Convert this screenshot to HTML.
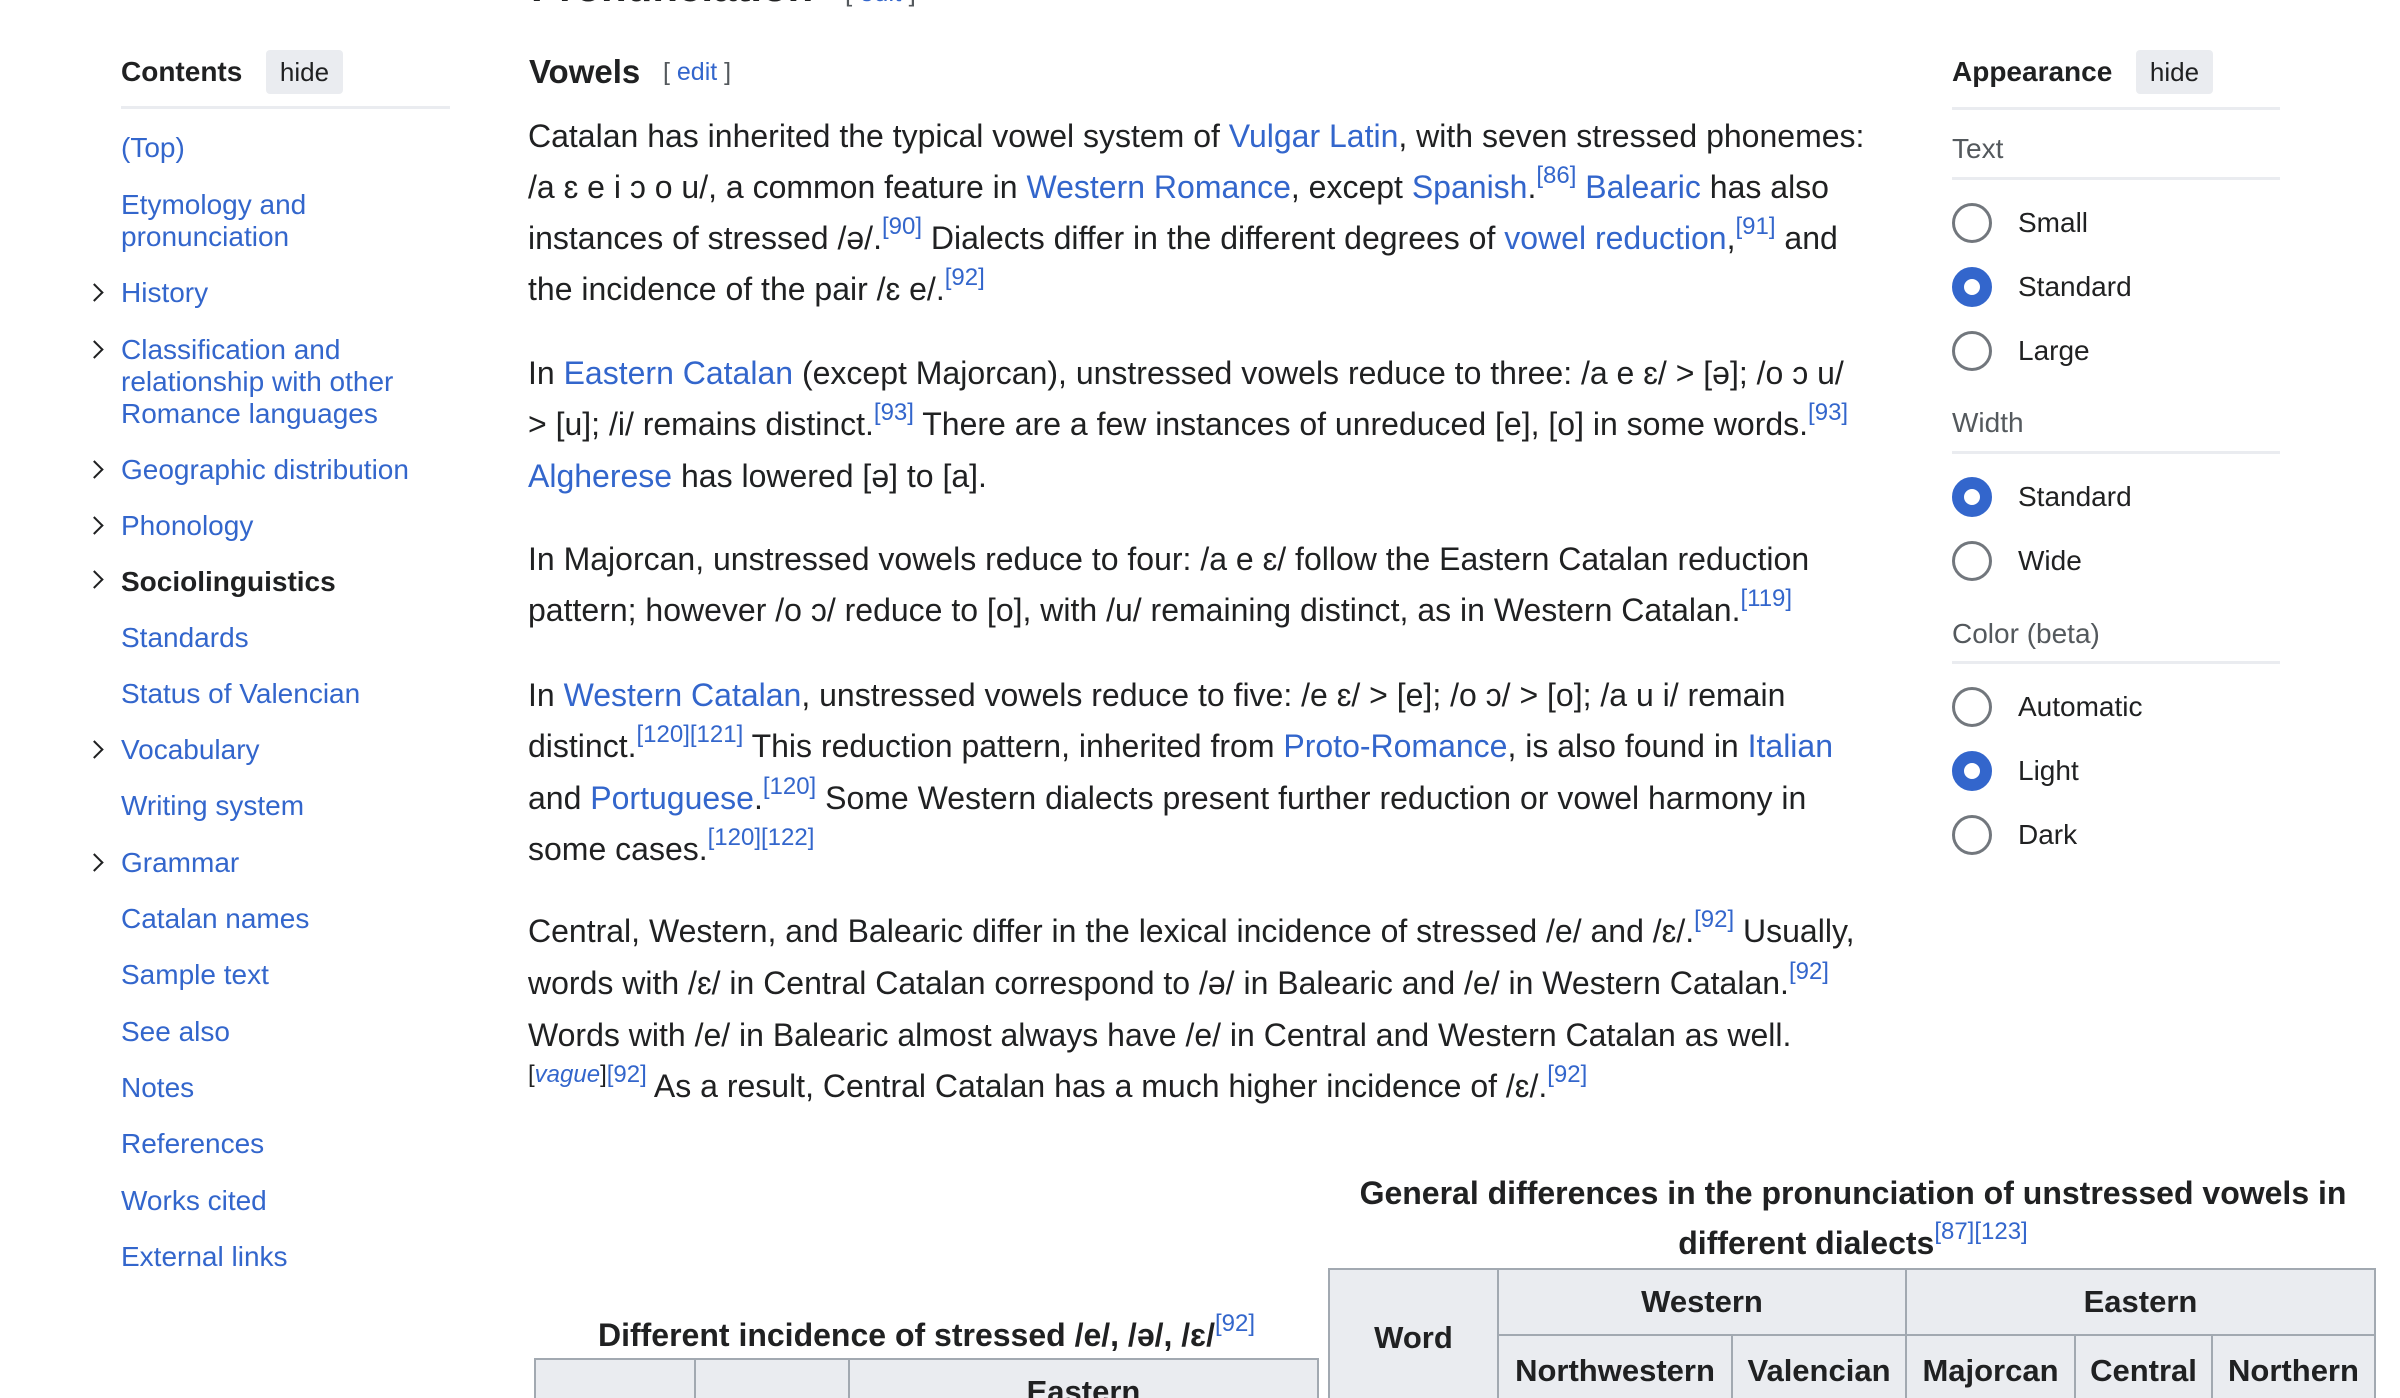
<!DOCTYPE html>
<html><head><meta charset="utf-8">
<style>
*{margin:0;padding:0;box-sizing:border-box}
html,body{width:2400px;height:1398px;overflow:hidden;background:#fff}
body{position:relative;font-family:"Liberation Sans",Arial,sans-serif;color:#202122}
a{color:#3366cc;text-decoration:none}
.abs{position:absolute;white-space:nowrap}
.toc{position:absolute;left:121px;font-size:28px;line-height:32px;color:#3366cc;white-space:nowrap}
.chev{position:absolute;left:88px;width:13px;height:13px;border-right:2.5px solid #202122;border-top:2.5px solid #202122;transform:rotate(45deg)}
.ln{position:absolute;left:528px;font-size:32px;line-height:52px;white-space:nowrap;color:#202122}
sup{font-size:24px;line-height:1;vertical-align:0;position:relative;top:-15px;color:#3366cc;font-weight:normal}
.lbl{position:absolute;left:1952px;font-size:28px;color:#54595d;line-height:32px}
.hr{position:absolute;left:1952px;width:328px;height:3px;background:#eaecf0}
.radio{position:absolute;left:1952px;width:40px;height:40px;border-radius:50%;border:3px solid #72777d;background:#fff}
.radio.on{border:12px solid #3366cc}
.rl{position:absolute;left:2018px;font-size:28px;line-height:32px;color:#202122}
.th{position:absolute;background:#eaecf0;border:2px solid #a2a9b1;font-weight:bold;font-size:31px;display:flex;align-items:center;justify-content:center;color:#202122}
</style></head><body>

<div class="abs" style="left:531px;top:-34px;font-size:42px;font-weight:bold;line-height:42px">Pronunciation <span style="font-weight:normal;font-size:26px;color:#54595d;margin-left:20px">[ <a>edit</a> ]</span></div>

<div class="abs" style="left:121px;top:56px;font-size:28px;font-weight:bold;line-height:32px">Contents</div>
<div class="abs" style="left:266px;top:50px;width:77px;height:44px;background:#eaecf0;border-radius:4px;font-size:26px;line-height:44px;text-align:center">hide</div>
<div class="abs" style="left:121px;top:106px;width:329px;height:3px;background:#eaecf0"></div>

<div class="toc" style="top:132px">(Top)</div>
<div class="toc" style="top:189px">Etymology and<br>pronunciation</div>
<div class="chev" style="top:286px"></div><div class="toc" style="top:277px">History</div>
<div class="chev" style="top:343px"></div><div class="toc" style="top:334px">Classification and<br>relationship with other<br>Romance languages</div>
<div class="chev" style="top:463px"></div><div class="toc" style="top:454px">Geographic distribution</div>
<div class="chev" style="top:519px"></div><div class="toc" style="top:510px">Phonology</div>
<div class="chev" style="top:573px"></div><div class="toc" style="top:566px;color:#202122;font-weight:bold">Sociolinguistics</div>
<div class="toc" style="top:622px">Standards</div>
<div class="toc" style="top:678px">Status of Valencian</div>
<div class="chev" style="top:743px"></div><div class="toc" style="top:734px">Vocabulary</div>
<div class="toc" style="top:790px">Writing system</div>
<div class="chev" style="top:856px"></div><div class="toc" style="top:847px">Grammar</div>
<div class="toc" style="top:903px">Catalan names</div>
<div class="toc" style="top:959px">Sample text</div>
<div class="toc" style="top:1016px">See also</div>
<div class="toc" style="top:1072px">Notes</div>
<div class="toc" style="top:1128px">References</div>
<div class="toc" style="top:1185px">Works cited</div>
<div class="toc" style="top:1241px">External links</div>

<div class="abs" style="left:529px;top:52px;font-size:33px;font-weight:bold;line-height:40px">Vowels</div>
<div class="abs" style="left:663px;top:56px;font-size:25px;line-height:32px;color:#54595d">[ <a>edit</a> ]</div>

<div class="ln" style="top:110px">Catalan has inherited the typical vowel system of <a>Vulgar Latin</a>, with seven stressed phonemes:</div>
<div class="ln" style="top:161px">/a ɛ e i ɔ o u/, a common feature in <a>Western Romance</a>, except <a>Spanish</a>.<sup>[86]</sup> <a>Balearic</a> has also</div>
<div class="ln" style="top:212px">instances of stressed /ə/.<sup>[90]</sup> Dialects differ in the different degrees of <a>vowel reduction</a>,<sup>[91]</sup> and</div>
<div class="ln" style="top:263px">the incidence of the pair /ɛ e/.<sup>[92]</sup></div>

<div class="ln" style="top:347px">In <a>Eastern Catalan</a> (except Majorcan), unstressed vowels reduce to three: /a e ɛ/ &gt; [ə]; /o ɔ u/</div>
<div class="ln" style="top:398px">&gt; [u]; /i/ remains distinct.<sup>[93]</sup> There are a few instances of unreduced [e], [o] in some words.<sup>[93]</sup></div>
<div class="ln" style="top:450px"><a>Algherese</a> has lowered [ə] to [a].</div>

<div class="ln" style="top:533px">In Majorcan, unstressed vowels reduce to four: /a e ɛ/ follow the Eastern Catalan reduction</div>
<div class="ln" style="top:584px">pattern; however /o ɔ/ reduce to [o], with /u/ remaining distinct, as in Western Catalan.<sup>[119]</sup></div>

<div class="ln" style="top:669px">In <a>Western Catalan</a>, unstressed vowels reduce to five: /e ɛ/ &gt; [e]; /o ɔ/ &gt; [o]; /a u i/ remain</div>
<div class="ln" style="top:720px">distinct.<sup>[120][121]</sup> This reduction pattern, inherited from <a>Proto-Romance</a>, is also found in <a>Italian</a></div>
<div class="ln" style="top:772px">and <a>Portuguese</a>.<sup>[120]</sup> Some Western dialects present further reduction or vowel harmony in</div>
<div class="ln" style="top:823px">some cases.<sup>[120][122]</sup></div>

<div class="ln" style="top:905px">Central, Western, and Balearic differ in the lexical incidence of stressed /e/ and /ɛ/.<sup>[92]</sup> Usually,</div>
<div class="ln" style="top:957px">words with /ɛ/ in Central Catalan correspond to /ə/ in Balearic and /e/ in Western Catalan.<sup>[92]</sup></div>
<div class="ln" style="top:1009px">Words with /e/ in Balearic almost always have /e/ in Central and Western Catalan as well.</div>
<div class="ln" style="top:1060px"><sup style="color:#202122">[<a><i>vague</i></a>]<a>[92]</a></sup> As a result, Central Catalan has a much higher incidence of /ɛ/.<sup>[92]</sup></div>

<div class="abs" style="left:1952px;top:56px;font-size:28px;font-weight:bold;line-height:32px">Appearance</div>
<div class="abs" style="left:2136px;top:50px;width:77px;height:44px;background:#eaecf0;border-radius:4px;font-size:26px;line-height:44px;text-align:center">hide</div>
<div class="hr" style="top:107px"></div>
<div class="lbl" style="top:133px">Text</div>
<div class="hr" style="top:177px"></div>
<div class="radio" style="top:203px"></div><div class="rl" style="top:207px">Small</div>
<div class="radio on" style="top:267px"></div><div class="rl" style="top:271px">Standard</div>
<div class="radio" style="top:331px"></div><div class="rl" style="top:335px">Large</div>
<div class="lbl" style="top:407px">Width</div>
<div class="hr" style="top:451px"></div>
<div class="radio on" style="top:477px"></div><div class="rl" style="top:481px">Standard</div>
<div class="radio" style="top:541px"></div><div class="rl" style="top:545px">Wide</div>
<div class="lbl" style="top:618px">Color (beta)</div>
<div class="hr" style="top:661px"></div>
<div class="radio" style="top:687px"></div><div class="rl" style="top:691px">Automatic</div>
<div class="radio on" style="top:751px"></div><div class="rl" style="top:755px">Light</div>
<div class="radio" style="top:815px"></div><div class="rl" style="top:819px">Dark</div>

<div class="abs" style="left:1328px;width:1050px;top:1168px;font-size:32px;font-weight:bold;line-height:50px;text-align:center;white-space:normal">General differences in the pronunciation of unstressed vowels in<br>different dialects<sup>[87][123]</sup></div>
<div class="th" style="left:1328px;top:1268px;width:171px;height:140px">Word</div>
<div class="th" style="left:1497px;top:1268px;width:410px;height:68px">Western</div>
<div class="th" style="left:1905px;top:1268px;width:471px;height:68px">Eastern</div>
<div class="th" style="left:1497px;top:1334px;width:236px;height:74px">Northwestern</div>
<div class="th" style="left:1731px;top:1334px;width:176px;height:74px">Valencian</div>
<div class="th" style="left:1905px;top:1334px;width:171px;height:74px">Majorcan</div>
<div class="th" style="left:2074px;top:1334px;width:139px;height:74px">Central</div>
<div class="th" style="left:2211px;top:1334px;width:165px;height:74px">Northern</div>

<div class="abs" style="left:534px;width:785px;top:1313px;font-size:32px;font-weight:bold;line-height:44px;text-align:center">Different incidence of stressed /e/, /ə/, /ɛ/<sup>[92]</sup></div>
<div class="th" style="left:534px;top:1358px;width:162px;height:80px"></div>
<div class="th" style="left:694px;top:1358px;width:156px;height:80px"></div>
<div class="th" style="left:848px;top:1358px;width:471px;height:80px;align-items:flex-start;padding-top:14px">Eastern</div>

</body></html>
